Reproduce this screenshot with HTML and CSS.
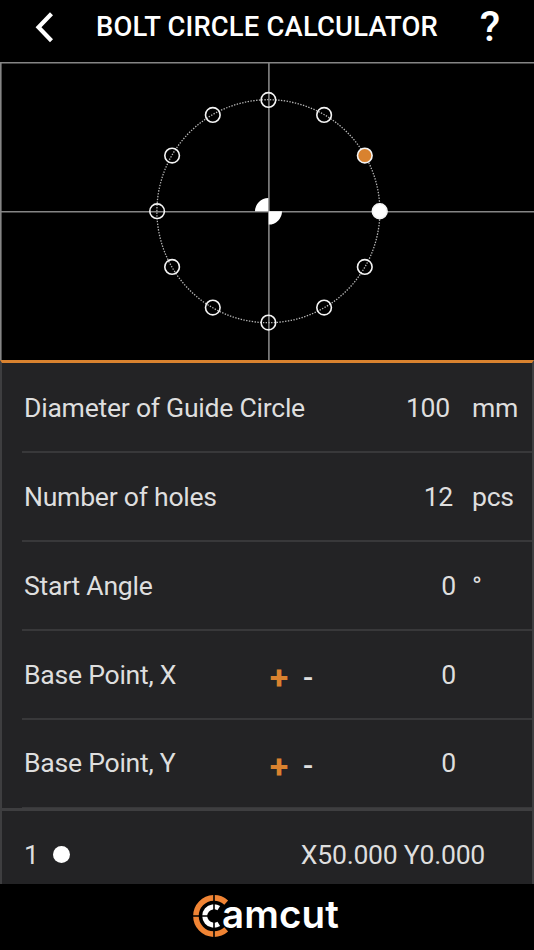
FILE: index.html
```
<!doctype html>
<html lang="en">

<head>
	<meta charset="utf-8">
	<meta name="viewport" content="width=device-width, initial-scale=1">

	<title>Bolt Circle Calculator</title>

	<link rel="stylesheet" href="styles.css">
</head>

<body>

	<header>
		<a class="back" title="Back">
			<svg width="18" height="32" viewBox="0 0 18 32"><path d="M16.5 2.7 3.5 16.2 16.5 29.7" /></svg>
		</a>
		<h1>BOLT CIRCLE CALCULATOR</h1>
		<a class="help" title="Help">?</a>
	</header>

	<svg class="plot" width="534" height="298" viewBox="0 62 534 298">

		<path class="axis" d="M0 62.6H534M0.8 62V360M0 211.8H534M268.9 62V360" />
		<circle class="guide" cx="268.4" cy="211.2" r="111.5" />

		<!-- base point -->
		<path class="base" d="M268.3 211.3H255A13.3 13.3 0 0 1 268.3 198ZM268.7 211.3H282A13.3 13.3 0 0 1 268.7 224.6Z" />

		<!-- holes -->
		<g class="holes">
			<circle class="first" cx="379.7" cy="211.2" r="7.4" />
			<circle class="second" cx="364.8" cy="155.6" r="7.3" />
			<circle cx="324.1" cy="114.9" r="7.3" />
			<circle cx="268.4" cy="99.9" r="7.3" />
			<circle cx="212.8" cy="114.9" r="7.3" />
			<circle cx="172.1" cy="155.6" r="7.3" />
			<circle cx="157.1" cy="211.2" r="7.3" />
			<circle cx="172.1" cy="266.9" r="7.3" />
			<circle cx="212.8" cy="307.6" r="7.3" />
			<circle cx="268.4" cy="322.6" r="7.3" />
			<circle cx="324.1" cy="307.6" r="7.3" />
			<circle cx="364.8" cy="266.9" r="7.3" />
		</g>

	</svg>

	<main>

		<div class="row">
			<span class="label">Diameter of Guide Circle</span>
			<span class="value wide">100</span>
			<span class="unit">mm</span>
		</div>

		<div class="row">
			<span class="label">Number of holes</span>
			<span class="value mid">12</span>
			<span class="unit">pcs</span>
		</div>

		<div class="row">
			<span class="label">Start Angle</span>
			<span class="value">0</span>
			<span class="unit">°</span>
		</div>

		<div class="row">
			<span class="label">Base Point, X</span>
			<span class="sign"><b>+</b><i>-</i></span>
			<span class="value">0</span>
			<span class="unit"></span>
		</div>

		<div class="row">
			<span class="label">Base Point, Y</span>
			<span class="sign"><b>+</b><i>-</i></span>
			<span class="value">0</span>
			<span class="unit"></span>
		</div>

	</main>

	<section class="result">
		<span>1</span>
		<span class="dot"></span>
		<span class="coords">X50.000 Y0.000</span>
	</section>

	<footer>
		<svg width="42" height="42" viewBox="-21 -21 42 42">
			<path class="outer" d="M12.2 -13.4A18.1 18.1 0 1 0 12.2 13.4" />
			<path class="inner" d="M4.8 -7.8A9.2 9.2 0 1 0 4.8 7.8" />
			<path class="cut" d="M0 -21V21M-21 0H0" />
		</svg>
		<span class="brand">amcut</span>
	</footer>

</body>

</html>
```
FILE: styles.css
```
* {
	box-sizing: border-box;
}

:root {
	--orange: #d9822f;
	--panel: #232325;
	--line: #3e3e40;
}

body {
	background-color: #000;
	color: #dedede;
	display: flex;
	flex-direction: column;
	font: 26.6px/30px Roboto, sans-serif;
	height: 950px;
	letter-spacing: -0.26px;
	margin: 0;
	overflow: hidden;
}

header {
	align-items: center;
	color: #fff;
	display: flex;
	height: 62px;
	padding: 0 34px 8px 35px;
}

.back {
	display: flex;
	width: 61px;
}

.back path {
	fill: none;
	stroke: #fff;
	stroke-width: 4.2;
}

h1 {
	flex: 1;
	font-size: 27.4px;
	font-weight: 500;
	letter-spacing: 0.18px;
	margin: 0;
	white-space: nowrap;
}

.help {
	font-size: 42px;
	font-weight: 500;
}

.plot {
	display: block;
	flex: none;
}

.axis {
	fill: none;
	stroke: #858585;
	stroke-width: 1.6;
}

.guide {
	fill: none;
	stroke: #b5b5b5;
	stroke-dasharray: 1.4 1.4;
	stroke-width: 1.3;
}

.base {
	fill: #fff;
}

.holes {
	fill: none;
	stroke: #f4f4f4;
	stroke-width: 1.6;
}

.first {
	fill: #fff;
}

.second {
	fill: var(--orange);
}

main {
	background-color: var(--panel);
	border: 2px solid var(--line);
	border-bottom-width: 3px;
	border-top: 3px solid var(--orange);
	height: 451px;
	padding-left: 20px;
}

.row {
	align-items: center;
	border-bottom: 2px solid #38383a;
	display: flex;
	height: 89px;
	padding-left: 2px;
}

.row:first-child {
	height: 90px;
	padding-top: 2px;
}

.row:last-child {
	border-bottom-width: 1px;
	height: 88px;
	padding-bottom: 1px;
}

.label {
	flex: 1;
}

.value {
	text-align: right;
	width: 80px;
	margin-right: 16px;
}

.value.mid {
	margin-right: 19px;
}

.value.wide {
	margin-right: 22px;
}

.unit {
	width: 60px;
}

.sign {
	align-items: center;
	display: flex;
	font-size: 30px;
	gap: 15px;
	margin-right: 63px;
	padding-top: 5px;
}

.sign b {
	color: var(--orange);
	font-size: 34px;
}

.sign i {
	font-style: normal;
	font-weight: 500;
	padding-top: 1px;
}

.result {
	align-items: center;
	background-color: var(--panel);
	border: solid var(--line);
	border-width: 0 2px;
	display: flex;
	flex: none;
	height: 73px;
	padding: 14px 47px 0 22px;
}

.dot {
	background-color: #fff;
	border-radius: 50%;
	height: 17px;
	margin-left: 14px;
	width: 17px;
}

.coords {
	margin-left: auto;
}

footer {
	align-items: center;
	display: flex;
	height: 66px;
	padding: 0 0 2px 193px;
}

footer svg {
	flex: none;
}

.outer {
	fill: none;
	stroke: #f08434;
	stroke-width: 5.6;
}

.inner {
	fill: none;
	stroke: #fff;
	stroke-width: 5;
}

.cut {
	stroke: #000;
	stroke-width: 1.6;
}

.brand {
	color: #fff;
	font: 600 38.5px/40px Inter, sans-serif;
	letter-spacing: 0.1px;
	margin-left: -13px;
	padding-bottom: 4px;
}
```
